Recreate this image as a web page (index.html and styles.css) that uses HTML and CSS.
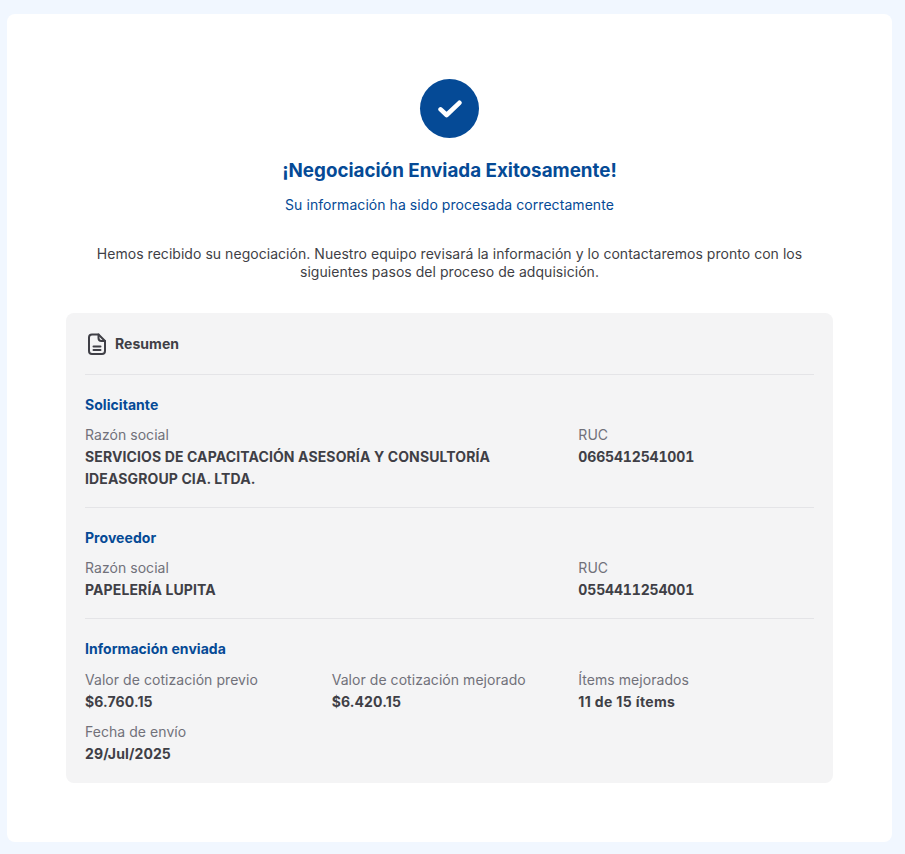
FILE: index.html
```html
<!DOCTYPE html>
<html lang="es">
<head>
    <meta charset="UTF-8" />
    <meta name="viewport" content="width=device-width, initial-scale=1.0"/>
    <title>Negociación Enviada</title>
    <link rel="stylesheet" href="styles.css">
</head>
<body>
    <main class="card">
        <div class="success-icon">
            <svg width="24" height="18" viewBox="0 0 24 18" fill="none" stroke="#ffffff" stroke-width="4.6" stroke-linecap="round" stroke-linejoin="round">
                <path d="M2.600 9.400l6 5.600L21.400 2.800"/>
            </svg>
        </div>
        <h1>¡Negociación Enviada Exitosamente!</h1>
        <p class="subtitle">Su información ha sido procesada correctamente</p>
        <p class="intro">Hemos recibido su negociación. Nuestro equipo revisará la información y lo contactaremos pronto con los siguientes pasos del proceso de adquisición.</p>

        <section class="summary">
            <div class="summary-head">
                <svg width="24" height="24" viewBox="0 0 24 24" fill="none" stroke="#3f3f46" stroke-width="2" stroke-linecap="round" stroke-linejoin="round">
                    <path d="M7 2.500h6.500L20 9v10a3 3 0 0 1-3 3H7a3 3 0 0 1-3-3V5.500a3 3 0 0 1 3-3z"/>
                    <path d="M13.500 2.500V6a3 3 0 0 0 3 3H20"/>
                    <path d="M8.500 14.500h7M8.500 18h7"/>
                </svg>
                <span>Resumen</span>
            </div>

            <div class="block">
                <h2>Solicitante</h2>
                <div class="fields">
                    <div class="field wide">
                        <span class="label">Razón social</span>
                        <span class="value">SERVICIOS DE CAPACITACIÓN ASESORÍA Y CONSULTORÍA IDEASGROUP CIA. LTDA.</span>
                    </div>
                    <div class="field">
                        <span class="label">RUC</span>
                        <span class="value code">0665412541001</span>
                    </div>
                </div>
            </div>

            <div class="block">
                <h2>Proveedor</h2>
                <div class="fields">
                    <div class="field wide">
                        <span class="label">Razón social</span>
                        <span class="value">PAPELERÍA LUPITA</span>
                    </div>
                    <div class="field">
                        <span class="label">RUC</span>
                        <span class="value code">0554411254001</span>
                    </div>
                </div>
            </div>

            <div class="block last">
                <h2>Información enviada</h2>
                <div class="fields">
                    <div class="field">
                        <span class="label">Valor de cotización previo</span>
                        <span class="value">$6.760.15</span>
                    </div>
                    <div class="field">
                        <span class="label">Valor de cotización mejorado</span>
                        <span class="value">$6.420.15</span>
                    </div>
                    <div class="field">
                        <span class="label">Ítems mejorados</span>
                        <span class="value items">11 de 15 ítems</span>
                    </div>
                    <div class="field">
                        <span class="label">Fecha de envío</span>
                        <span class="value">29/Jul/2025</span>
                    </div>
                </div>
            </div>
        </section>
    </main>
</body>
</html>
```

FILE: styles.css
```css
* {
    box-sizing: border-box;
    margin: 0;
    padding: 0;
}

body {
    font-family: Inter, "Liberation Sans", sans-serif;
    background-color: #f1f7ff;
    padding: 14px 13px 12px 7px;
    color: #3f3f46;
}

.card {
    background-color: #ffffff;
    border-radius: 8px;
    height: 828px;
    padding: 65px 59px 0;
    display: flex;
    flex-direction: column;
    align-items: center;
}

.success-icon {
    width: 59px;
    height: 59px;
    border-radius: 50%;
    background-color: #054a96;
    display: flex;
    justify-content: center;
    align-items: center;
}

h1 {
    margin-top: 19px;
    font-size: 18.800px;
    line-height: 28px;
    font-weight: 650;
    color: #054a96;
}

.subtitle {
    margin-top: 9px;
    font-size: 14px;
    line-height: 22px;
    letter-spacing: 0.06px;
    color: #054a96;
}

.intro {
    margin-top: 29px;
    width: 720px;
    font-size: 14px;
    line-height: 18px;
    letter-spacing: 0.04px;
    text-align: center;
}

.summary {
    margin-top: 32px;
    width: 100%;
    background-color: #f4f4f5;
    border-radius: 8px;
    padding: 0 19px 9px;
}

.summary-head {
    display: flex;
    align-items: center;
    gap: 6px;
    height: 61px;
    font-size: 14px;
    font-weight: 650;
    letter-spacing: 0.05px;
}

.block {
    border-top: 1px solid #e4e4e7;
    padding: 19px 0 17.700px;
}

.block.last {
    padding-bottom: 9px;
}

.block.last h2 {
    margin-bottom: 9px;
}

h2 {
    font-size: 14px;
    line-height: 22px;
    font-weight: 650;
    letter-spacing: 0.05px;
    color: #054a96;
    margin-bottom: 8px;
}

.fields {
    display: grid;
    grid-template-columns: repeat(3, 1fr);
    column-gap: 11px;
    row-gap: 9px;
}

.field {
    display: flex;
    flex-direction: column;
}

.field.wide {
    grid-column: span 2;
    padding-right: 40px;
}

.label {
    font-size: 14px;
    line-height: 22px;
    letter-spacing: 0.05px;
    color: #71717a;
}

.value {
    font-size: 14px;
    line-height: 21.500px;
    font-weight: 650;
    letter-spacing: 0.12px;
    color: #3f3f46;
}

.value.code {
    font-variant-numeric: tabular-nums;
    letter-spacing: -0.15px;
}

.value.items {
    letter-spacing: 0.36px;
}
```
